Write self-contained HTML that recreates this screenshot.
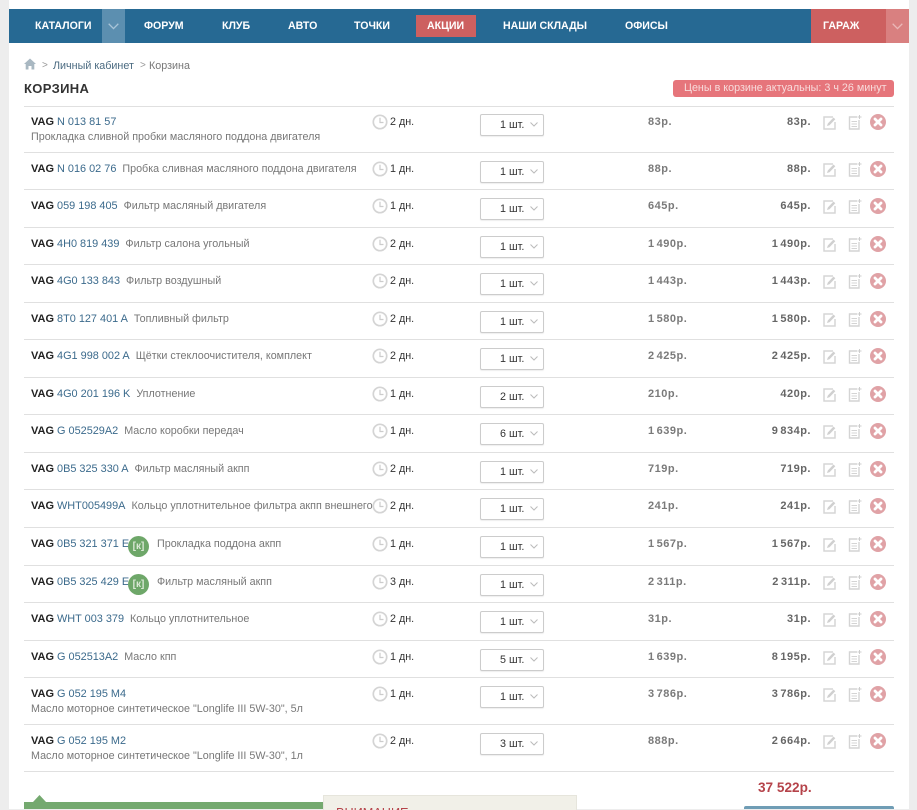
<!DOCTYPE html>
<html lang="ru"><head><meta charset="utf-8"><title>Корзина</title>
<style>
html,body{margin:0;padding:0}
body{width:917px;height:809px;position:relative;overflow:hidden;background:#ededed;font:10.75px/14px "Liberation Sans",sans-serif;color:#777}
#w{position:absolute;left:9px;top:0;width:900px;height:809px;background:#fff}
#p{position:absolute;left:0;top:0;width:917px;height:809px}
#p>*{position:absolute}
.n{top:19px;font-weight:bold;font-size:10.6px;line-height:14px;color:#fff;white-space:nowrap}
.r{left:24px;width:870px;height:0;border-top:1px solid #e0e0e0}
.r>*{position:absolute;white-space:nowrap}
.t{left:7px;top:9px;color:#777}
.t b{color:#222;font-size:11px}.t a{color:#3b6a8c;margin:0 3px 0 0;font-size:10.9px}
.t i{font-style:normal;margin-left:3px}
.d{left:7px;top:23px}
.u .t{top:8px}
.c{left:348px;top:8px;width:16px;height:16px}
.u .c{top:7px}
.y{left:366px;top:9px;color:#333}
.u .y{top:8px}
.s{left:456px;top:8px;width:62px;height:20px;border:1px solid #ccc;border-radius:2px;background:#fff;box-shadow:0 1px 1px #eee}
.u .s{top:7px}
.s span{position:absolute;left:19px;top:3px;color:#333}
.s svg{position:absolute;left:49px;top:7px}
.a,.b{font-weight:bold;letter-spacing:.5px;word-spacing:-1.5px;top:9px;font-size:11px}
.u .a,.u .b{top:8px}
.a{left:624px;color:#7a7a7a}
.b{right:83px;color:#666}
.e{left:799px;top:9px}.u .e{top:8px}
.f{left:824px;top:9px}.u .f{top:8px}
.x{left:845.5px;top:8px}.u .x{top:7px}
.g{left:104px;top:8px;width:21px;height:21px;border-radius:50%;background:#6ea769;color:#dbe8d6;font-weight:bold;font-size:10px;line-height:21px;text-align:center}
</style></head><body>
<svg width="0" height="0" style="position:absolute"><defs>
<symbol id="cl" viewBox="0 0 16 16"><circle cx="8" cy="8" r="6.7" fill="none" stroke="#d4d4d4" stroke-width="1.7"/><path d="M8 3.8V8.5H11.5" fill="none" stroke="#cccccc" stroke-width="1.2"/></symbol>
<symbol id="ch" viewBox="0 0 8 5"><path d="M.5.5L4 4 7.5.5" fill="none" stroke="#bbb" stroke-width="1"/></symbol>
<symbol id="pe" viewBox="0 0 14 15"><path d="M10 2H1V14H12V7" fill="none" stroke="#d6d6d6" stroke-width="1.5"/><path d="M4 11L4.8 8.5 10.5 2.5 12.3 4.3 6.5 10.2Z" fill="#d0d0d0"/></symbol>
<symbol id="no" viewBox="0 0 14 15"><path d="M9 2H1.5V14H11V5" fill="none" stroke="#d4d4d4" stroke-width="1.4"/><path d="M3.5 6.5H9M3.5 9H9M3.5 11.5H9" stroke="#d4d4d4" stroke-width="1"/><path d="M11.5 0V4M9.5 2H13.500" stroke="#ccc" stroke-width="1"/></symbol>
<symbol id="xx" viewBox="0 0 16 16"><circle cx="8" cy="8" r="8" fill="#e0a2a6"/><path d="M5 5L11 11M11 5L5 11" stroke="#fff" stroke-width="2.8" stroke-linecap="round"/></symbol>
</defs></svg>
<div id="w"></div>
<div id="p">
<div style="left:9px;top:9px;width:900px;height:34px;background:#266993"></div>
<div style="left:102px;top:9px;width:23px;height:34px;background:#5c8fb0"></div>
<svg style="left:108px;top:23px" width="11" height="7" viewBox="0 0 8 5"><path d="M.5.5L4 4 7.500.5" fill="none" stroke="#a9c5d8" stroke-width=".9"/></svg>
<span class="n" style="left:35px">КАТАЛОГИ</span>
<span class="n" style="left:144px">ФОРУМ</span>
<span class="n" style="left:222px">КЛУБ</span>
<span class="n" style="left:288px">АВТО</span>
<span class="n" style="left:354px">ТОЧКИ</span>
<div style="left:416px;top:15px;width:60px;height:22px;background:#cd6060"></div>
<span class="n" style="left:427px">АКЦИИ</span>
<span class="n" style="left:503px">НАШИ СКЛАДЫ</span>
<span class="n" style="left:625px">ОФИСЫ</span>
<div style="left:811px;top:9px;width:75px;height:34px;background:#cd6060"></div>
<div style="left:886px;top:9px;width:23px;height:34px;background:#d98080"></div>
<svg style="left:892px;top:23px" width="11" height="7" viewBox="0 0 8 5"><path d="M.5.5L4 4 7.500.5" fill="none" stroke="#eab8b8" stroke-width=".9"/></svg>
<span class="n" style="left:823px">ГАРАЖ</span>

<svg style="left:24px;top:58px" width="12" height="12" viewBox="0 0 12 12"><path d="M6 .5L12 6H10.300V11.500H7.500V8H4.500V11.500H1.700V6H0Z" fill="#a9b8c2"/></svg>
<span style="left:42px;top:59px;color:#999;font-size:10px">&gt;</span>
<span style="left:53px;top:59px;color:#4a6a80">Личный кабинет</span>
<span style="left:140px;top:59px;color:#999;font-size:10px">&gt;</span>
<span style="left:149px;top:59px;color:#777">Корзина</span>
<span style="left:24px;top:82px;font-weight:bold;font-size:13px;letter-spacing:.35px;color:#333">КОРЗИНА</span>
<div style="left:673px;top:80px;width:221px;height:17px;background:#e6757b;border-radius:3px;color:#f8dcdc;line-height:17px;white-space:nowrap;text-indent:11px">Цены в корзине актуальны: 3 ч 26 минут</div>

<div class="r u" style="top:106px"><div class="t"><b>VAG</b> <a>N 013 81 57</a></div><div class="d">Прокладка сливной пробки масляного поддона двигателя</div><svg class="c"><use href="#cl"/></svg><span class="y">2 дн.</span><div class="s"><span>1 шт.</span><svg width="8" height="5"><use href="#ch"/></svg></div><span class="a">83р.</span><span class="b">83р.</span><svg class="e" width="14" height="15"><use href="#pe"/></svg><svg class="f" width="14" height="15"><use href="#no"/></svg><svg class="x" width="16" height="16"><use href="#xx"/></svg></div>
<div class="r" style="top:152px"><div class="t"><b>VAG</b> <a>N 016 02 76</a><i>Пробка сливная масляного поддона двигателя</i></div><svg class="c"><use href="#cl"/></svg><span class="y">1 дн.</span><div class="s"><span>1 шт.</span><svg width="8" height="5"><use href="#ch"/></svg></div><span class="a">88р.</span><span class="b">88р.</span><svg class="e" width="14" height="15"><use href="#pe"/></svg><svg class="f" width="14" height="15"><use href="#no"/></svg><svg class="x" width="16" height="16"><use href="#xx"/></svg></div>
<div class="r" style="top:189px"><div class="t"><b>VAG</b> <a>059 198 405</a><i>Фильтр масляный двигателя</i></div><svg class="c"><use href="#cl"/></svg><span class="y">1 дн.</span><div class="s"><span>1 шт.</span><svg width="8" height="5"><use href="#ch"/></svg></div><span class="a">645р.</span><span class="b">645р.</span><svg class="e" width="14" height="15"><use href="#pe"/></svg><svg class="f" width="14" height="15"><use href="#no"/></svg><svg class="x" width="16" height="16"><use href="#xx"/></svg></div>
<div class="r" style="top:227px"><div class="t"><b>VAG</b> <a>4H0 819 439</a><i>Фильтр салона угольный</i></div><svg class="c"><use href="#cl"/></svg><span class="y">2 дн.</span><div class="s"><span>1 шт.</span><svg width="8" height="5"><use href="#ch"/></svg></div><span class="a">1 490р.</span><span class="b">1 490р.</span><svg class="e" width="14" height="15"><use href="#pe"/></svg><svg class="f" width="14" height="15"><use href="#no"/></svg><svg class="x" width="16" height="16"><use href="#xx"/></svg></div>
<div class="r" style="top:264px"><div class="t"><b>VAG</b> <a>4G0 133 843</a><i>Фильтр воздушный</i></div><svg class="c"><use href="#cl"/></svg><span class="y">2 дн.</span><div class="s"><span>1 шт.</span><svg width="8" height="5"><use href="#ch"/></svg></div><span class="a">1 443р.</span><span class="b">1 443р.</span><svg class="e" width="14" height="15"><use href="#pe"/></svg><svg class="f" width="14" height="15"><use href="#no"/></svg><svg class="x" width="16" height="16"><use href="#xx"/></svg></div>
<div class="r" style="top:302px"><div class="t"><b>VAG</b> <a>8T0 127 401 A</a><i>Топливный фильтр</i></div><svg class="c"><use href="#cl"/></svg><span class="y">2 дн.</span><div class="s"><span>1 шт.</span><svg width="8" height="5"><use href="#ch"/></svg></div><span class="a">1 580р.</span><span class="b">1 580р.</span><svg class="e" width="14" height="15"><use href="#pe"/></svg><svg class="f" width="14" height="15"><use href="#no"/></svg><svg class="x" width="16" height="16"><use href="#xx"/></svg></div>
<div class="r" style="top:339px"><div class="t"><b>VAG</b> <a>4G1 998 002 A</a><i>Щётки стеклоочистителя, комплект</i></div><svg class="c"><use href="#cl"/></svg><span class="y">2 дн.</span><div class="s"><span>1 шт.</span><svg width="8" height="5"><use href="#ch"/></svg></div><span class="a">2 425р.</span><span class="b">2 425р.</span><svg class="e" width="14" height="15"><use href="#pe"/></svg><svg class="f" width="14" height="15"><use href="#no"/></svg><svg class="x" width="16" height="16"><use href="#xx"/></svg></div>
<div class="r" style="top:377px"><div class="t"><b>VAG</b> <a>4G0 201 196 K</a><i>Уплотнение</i></div><svg class="c"><use href="#cl"/></svg><span class="y">1 дн.</span><div class="s"><span>2 шт.</span><svg width="8" height="5"><use href="#ch"/></svg></div><span class="a">210р.</span><span class="b">420р.</span><svg class="e" width="14" height="15"><use href="#pe"/></svg><svg class="f" width="14" height="15"><use href="#no"/></svg><svg class="x" width="16" height="16"><use href="#xx"/></svg></div>
<div class="r" style="top:414px"><div class="t"><b>VAG</b> <a>G 052529A2</a><i>Масло коробки передач</i></div><svg class="c"><use href="#cl"/></svg><span class="y">1 дн.</span><div class="s"><span>6 шт.</span><svg width="8" height="5"><use href="#ch"/></svg></div><span class="a">1 639р.</span><span class="b">9 834р.</span><svg class="e" width="14" height="15"><use href="#pe"/></svg><svg class="f" width="14" height="15"><use href="#no"/></svg><svg class="x" width="16" height="16"><use href="#xx"/></svg></div>
<div class="r" style="top:452px"><div class="t"><b>VAG</b> <a>0B5 325 330 A</a><i>Фильтр масляный акпп</i></div><svg class="c"><use href="#cl"/></svg><span class="y">2 дн.</span><div class="s"><span>1 шт.</span><svg width="8" height="5"><use href="#ch"/></svg></div><span class="a">719р.</span><span class="b">719р.</span><svg class="e" width="14" height="15"><use href="#pe"/></svg><svg class="f" width="14" height="15"><use href="#no"/></svg><svg class="x" width="16" height="16"><use href="#xx"/></svg></div>
<div class="r" style="top:489px"><div class="t"><b>VAG</b> <a>WHT005499A</a><i>Кольцо уплотнительное фильтра акпп внешнего</i></div><svg class="c"><use href="#cl"/></svg><span class="y">2 дн.</span><div class="s"><span>1 шт.</span><svg width="8" height="5"><use href="#ch"/></svg></div><span class="a">241р.</span><span class="b">241р.</span><svg class="e" width="14" height="15"><use href="#pe"/></svg><svg class="f" width="14" height="15"><use href="#no"/></svg><svg class="x" width="16" height="16"><use href="#xx"/></svg></div>
<div class="r" style="top:527px"><div class="t"><b>VAG</b> <a>0B5 321 371 E</a></div><span class="t" style="left:133px">Прокладка поддона акпп</span><div class="g">[к]</div><svg class="c"><use href="#cl"/></svg><span class="y">1 дн.</span><div class="s"><span>1 шт.</span><svg width="8" height="5"><use href="#ch"/></svg></div><span class="a">1 567р.</span><span class="b">1 567р.</span><svg class="e" width="14" height="15"><use href="#pe"/></svg><svg class="f" width="14" height="15"><use href="#no"/></svg><svg class="x" width="16" height="16"><use href="#xx"/></svg></div>
<div class="r" style="top:565px"><div class="t"><b>VAG</b> <a>0B5 325 429 E</a></div><span class="t" style="left:133px">Фильтр масляный акпп</span><div class="g">[к]</div><svg class="c"><use href="#cl"/></svg><span class="y">3 дн.</span><div class="s"><span>1 шт.</span><svg width="8" height="5"><use href="#ch"/></svg></div><span class="a">2 311р.</span><span class="b">2 311р.</span><svg class="e" width="14" height="15"><use href="#pe"/></svg><svg class="f" width="14" height="15"><use href="#no"/></svg><svg class="x" width="16" height="16"><use href="#xx"/></svg></div>
<div class="r" style="top:602px"><div class="t"><b>VAG</b> <a>WHT 003 379</a><i>Кольцо уплотнительное</i></div><svg class="c"><use href="#cl"/></svg><span class="y">2 дн.</span><div class="s"><span>1 шт.</span><svg width="8" height="5"><use href="#ch"/></svg></div><span class="a">31р.</span><span class="b">31р.</span><svg class="e" width="14" height="15"><use href="#pe"/></svg><svg class="f" width="14" height="15"><use href="#no"/></svg><svg class="x" width="16" height="16"><use href="#xx"/></svg></div>
<div class="r" style="top:640px"><div class="t"><b>VAG</b> <a>G 052513A2</a><i>Масло кпп</i></div><svg class="c"><use href="#cl"/></svg><span class="y">1 дн.</span><div class="s"><span>5 шт.</span><svg width="8" height="5"><use href="#ch"/></svg></div><span class="a">1 639р.</span><span class="b">8 195р.</span><svg class="e" width="14" height="15"><use href="#pe"/></svg><svg class="f" width="14" height="15"><use href="#no"/></svg><svg class="x" width="16" height="16"><use href="#xx"/></svg></div>
<div class="r" style="top:677px"><div class="t"><b>VAG</b> <a>G 052 195 M4</a></div><div class="d" style="top:24px">Масло моторное синтетическое "Longlife III 5W-30", 5л</div><svg class="c"><use href="#cl"/></svg><span class="y">1 дн.</span><div class="s"><span>1 шт.</span><svg width="8" height="5"><use href="#ch"/></svg></div><span class="a">3 786р.</span><span class="b">3 786р.</span><svg class="e" width="14" height="15"><use href="#pe"/></svg><svg class="f" width="14" height="15"><use href="#no"/></svg><svg class="x" width="16" height="16"><use href="#xx"/></svg></div>
<div class="r" style="top:724px"><div class="t"><b>VAG</b> <a>G 052 195 M2</a></div><div class="d" style="top:24px">Масло моторное синтетическое "Longlife III 5W-30", 1л</div><svg class="c"><use href="#cl"/></svg><span class="y">2 дн.</span><div class="s"><span>3 шт.</span><svg width="8" height="5"><use href="#ch"/></svg></div><span class="a">888р.</span><span class="b">2 664р.</span><svg class="e" width="14" height="15"><use href="#pe"/></svg><svg class="f" width="14" height="15"><use href="#no"/></svg><svg class="x" width="16" height="16"><use href="#xx"/></svg></div>
<div class="r" style="top:771px"></div>

<div style="left:758px;top:781px;font-weight:bold;font-size:13.6px;color:#b5434a;white-space:nowrap">37 522р.</div>
<svg style="left:33px;top:795px" width="13" height="7"><path d="M6.500 0L13 7H0Z" fill="#74a96f"/></svg>
<div style="left:24px;top:802px;width:299px;height:7px;background:#74a96f"></div>
<div style="left:323px;top:795px;width:252px;height:14px;background:#f1f0e8;border:1px solid #e6e5dc;border-bottom:0;overflow:hidden"><span style="position:absolute;left:12px;top:10px;color:#b5434a;font-size:12.7px;white-space:nowrap">ВНИМАНИЕ</span></div>
<div style="left:744px;top:806px;width:150px;height:3px;background:#6f9db5;border-radius:2px 2px 0 0"></div>
</div>
</body></html>
